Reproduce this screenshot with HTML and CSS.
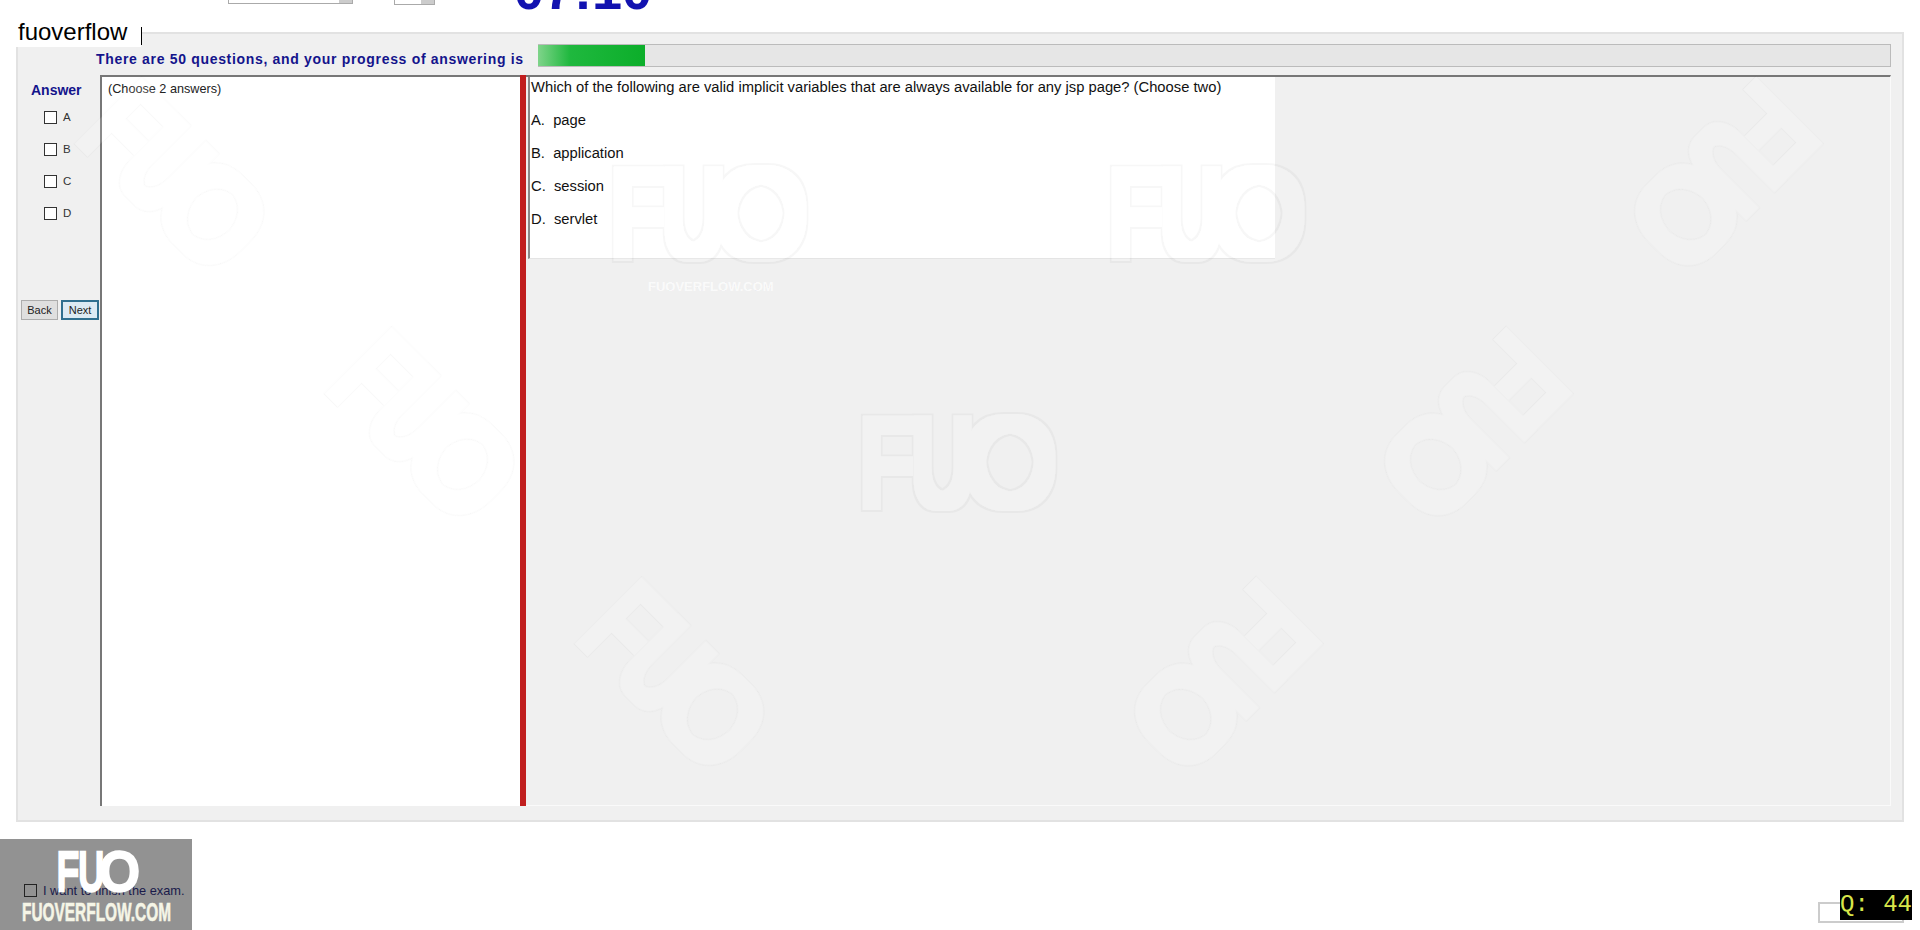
FILE: index.html
```html
<!DOCTYPE html>
<html lang="en">
<head>
    <meta charset="UTF-8">
    <title>Exam</title>
    <meta name="viewport" content="width=device-width, initial-scale=1.0">
    <link rel="stylesheet" href="styles.css">
</head>
<body>
    <div class="top-bar">
        <div class="combo"><span class="combo-arrow"></span></div>
        <div class="combo combo-small"><span class="combo-arrow"></span></div>
        <div class="clock">07:10</div>
    </div>
    <div class="exam-frame">
        <div class="exam-title">fuoverflow<span class="caret"></span></div>
        <div class="progress-row">
            <div class="progress-text">There are 50 questions, and your progress of answering is</div>
            <div class="progress-track"><div class="progress-fill"></div></div>
        </div>
        <div class="exam-main">
            <div class="answer-col">
                <div class="answer-title">Answer</div>
                <label class="opt"><span class="box"></span>A</label>
                <label class="opt"><span class="box"></span>B</label>
                <label class="opt"><span class="box"></span>C</label>
                <label class="opt"><span class="box"></span>D</label>
                <div class="nav-btns">
                    <button class="btn">Back</button>
                    <button class="btn btn-active">Next</button>
                </div>
            </div>
            <div class="left-pane">(Choose 2 answers)</div>
            <div class="splitter"></div>
            <div class="right-pane">
                <div class="question">
                    <p>Which of the following are valid implicit variables that are always available for any jsp page? (Choose two)</p>
                    <p>A.&nbsp; page</p>
                    <p>B.&nbsp; application</p>
                    <p>C.&nbsp; session</p>
                    <p>D.&nbsp; servlet</p>
                </div>
            </div>
        </div>
    </div>
    <div class="bottom-bar">
        <label class="finish"><span class="box box-dark"></span>I want to finish the exam.</label>
        <div class="q-box"></div>
        <div class="q-label">Q: 44</div>
    </div>

    <!-- watermark lies over the whole page -->
    <svg class="watermark" width="1920" height="930" viewBox="0 0 1920 930">
        <defs>
            <filter id="wm-outline" x="-10%" y="-20%" width="120%" height="140%">
                <feMorphology in="SourceAlpha" operator="dilate" radius="5" result="inner"/>
                <feMorphology in="SourceAlpha" operator="dilate" radius="6.5" result="outer"/>
                <feComposite in="outer" in2="inner" operator="out" result="ring"/>
                <feFlood flood-color="#000" flood-opacity="0.03"/>
                <feComposite in2="ring" operator="in"/>
                <feGaussianBlur stdDeviation="0.5" result="edge"/>
                <feFlood flood-color="#fff" flood-opacity="0.14"/>
                <feComposite in2="inner" operator="in" result="body"/>
                <feMerge>
                    <feMergeNode in="edge"/>
                    <feMergeNode in="body"/>
                </feMerge>
            </filter>
            <text id="fuo" class="wm-text" filter="url(#wm-outline)"><tspan textLength="112" lengthAdjust="spacingAndGlyphs">FU</tspan><tspan dx="-9" textLength="92" lengthAdjust="spacingAndGlyphs">O</tspan></text>
        </defs>
        <use href="#fuo" transform="translate(77 139) rotate(45)"/>
        <use href="#fuo" transform="translate(327 389) rotate(45)"/>
        <use href="#fuo" transform="translate(577 639) rotate(45)"/>
        <use href="#fuo" transform="translate(612 256)"/>
        <use href="#fuo" transform="translate(1110 256)"/>
        <use href="#fuo" transform="translate(861 505)"/>
        <use href="#fuo" transform="translate(1761 79) rotate(135)"/>
        <use href="#fuo" transform="translate(1511 329) rotate(135)"/>
        <use href="#fuo" transform="translate(1261 579) rotate(135)"/>
        <text class="wm-small" x="648" y="291">FUOVERFLOW.COM</text>
    </svg>
    <div class="logo">
        <svg class="logo-svg" width="192" height="91" viewBox="0 0 192 91">
            <text class="logo-mark" x="57" y="51"><tspan textLength="47" lengthAdjust="spacingAndGlyphs">FU</tspan><tspan dx="-4" textLength="39" lengthAdjust="spacingAndGlyphs">O</tspan></text>
            <text class="logo-name" x="22" y="82" textLength="149" lengthAdjust="spacingAndGlyphs">FUOVERFLOW.COM</text>
        </svg>
    </div>
</body>
</html>
```
FILE: styles.css
```css
html, body { margin: 0; height: 930px; overflow: hidden; }
body { font-family: "Liberation Sans", Arial, sans-serif; background: #fff; color: #111; position: relative; }

.top-bar { height: 32px; display: flex; align-items: flex-start; padding-left: 228px; }
.combo { width: 123px; height: 3px; border: 1px solid #aaa; border-top: none; position: relative; margin-right: 41px; }
.combo-small { width: 39px; height: 4px; margin-right: 79px; }
.combo-arrow { position: absolute; right: 0; top: 0; width: 13px; height: 100%; background: #ccc; }
.clock { font-size: 54px; font-weight: bold; color: #1212b0; line-height: 54px; margin-top: -37px; }

.exam-frame { position: relative; margin-left: 16px; width: 1888px; height: 790px; box-sizing: border-box; background: #f0f0f0; border: 2px solid #e2e2e2; padding: 10px 11px 14px 3px; display: flex; flex-direction: column; }
.exam-title { position: absolute; left: -2px; top: -14px; width: 123px; height: 27px; background: #fff; font-size: 24px; line-height: 24px; padding: 0 0 0 2px; color: #000; }
.caret { position: absolute; left: 125px; top: 7px; width: 1px; height: 18px; background: #000; }

.progress-row { display: flex; height: 23px; padding-left: 75px; }
.progress-text { width: 442px; padding-top: 7px; font-size: 14px; line-height: 16px; font-weight: bold; color: #14148c; white-space: nowrap; letter-spacing: 0.68px; }
.progress-track { flex: 1; height: 23px; box-sizing: border-box; background: #e6e6e6; border: 1px solid #bbb; border-left: none; }
.progress-fill { width: 107px; height: 100%; background: linear-gradient(90deg, #7fd48a, #1fb83e 30%, #0cae2a); }

.exam-main { flex: 1; display: flex; margin-top: 8px; min-height: 0; }
.answer-col { width: 79px; flex: none; display: flex; flex-direction: column; }
.answer-title { font-size: 14px; font-weight: bold; color: #14148c; padding: 7px 0 0 10px; height: 19px; }
.opt { display: flex; align-items: center; height: 32px; padding-left: 23px; font-size: 11.5px; color: #333; }
.box { width: 13px; height: 13px; box-sizing: border-box; border: 1px solid #333; background: #fff; margin-right: 6px; flex: none; }
.nav-btns { display: flex; gap: 3px; margin-top: 71px; }
.btn { width: 37px; height: 20px; padding: 0; font-family: inherit; font-size: 11px; color: #222; background: #dfdfdf; border: 1px solid #adadad; }
.btn-active { width: 38px; border: 2px solid #2f6f8f; background: #dceaf3; }

.left-pane { width: 406px; flex: none; background: #fff; border-top: 2px solid #777; border-left: 2px solid #777; padding: 5px 6px; font-size: 12.67px; color: #222; }
.splitter { width: 6px; flex: none; background: #c11f1f; }
.right-pane { flex: 1; border-top: 2px solid #777; border-right: 1px solid #fafafa; border-bottom: 1px solid #fafafa; }
.question { width: 747px; height: 182px; box-sizing: border-box; background: #fff; border-left: 2px solid #8a8a8a; border-bottom: 1px solid #e4e4e4; margin-left: 2px; padding-top: 3px; padding-left: 1px; font-size: 14.75px; color: #111; }
.question p { margin: 0 0 18px; line-height: 15px; }

.finish { position: absolute; left: 24px; top: 883px; display: flex; align-items: center; font-size: 12.8px; color: #1a1a4a; z-index: 2; }
.box-dark { background: transparent; border-color: #222; }
.q-box { position: absolute; left: 1818px; top: 902px; width: 86px; height: 21px; box-sizing: border-box; border: 2px solid #ccc; }
.q-label { position: absolute; left: 1840px; top: 890px; width: 72px; height: 30px; background: #000; color: #d8e64a; font-family: "Liberation Mono", monospace; font-size: 24px; line-height: 30px; white-space: pre; overflow: hidden; }

.watermark { position: absolute; left: 0; top: 0; pointer-events: none; }
.wm-text { font-family: "Liberation Sans", sans-serif; font-size: 122px; }
.wm-small { font-family: "Liberation Sans", sans-serif; font-weight: bold; font-size: 13px; fill: #fafafa; stroke: rgba(0,0,0,0.05); stroke-width: 0.5; }

.logo { position: absolute; left: 0; top: 839px; width: 192px; height: 91px; background: #929292; }
.logo-svg { position: relative; z-index: 3; display: block; }
.logo-mark { font-family: "Liberation Sans", sans-serif; font-size: 53px; fill: #fff; stroke: #fff; stroke-width: 4.5; }
.logo-name { font-family: "Liberation Sans", sans-serif; font-weight: bold; font-size: 25px; fill: #f5f5e6; stroke: #f5f5e6; stroke-width: 0.6; }
```
